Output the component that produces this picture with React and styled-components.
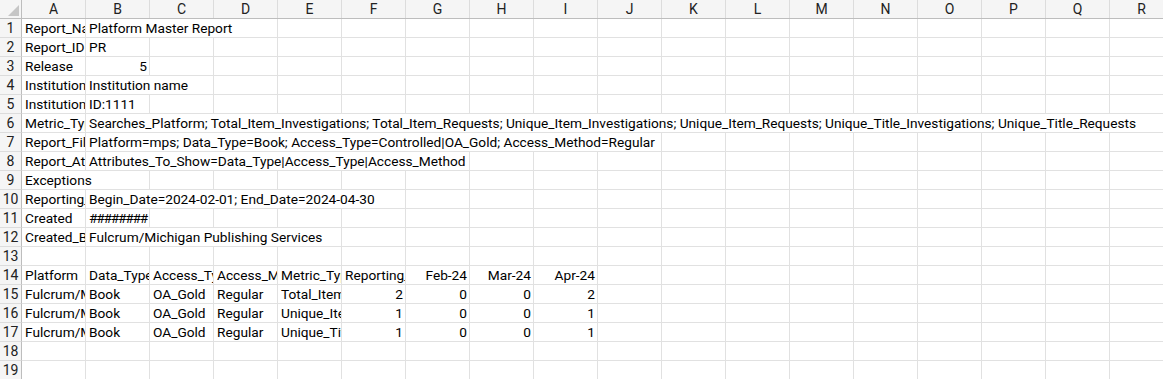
import React from "react";
import styled, { createGlobalStyle } from "styled-components";

const GlobalStyle = createGlobalStyle`
    html, body {
        margin: 0;
        padding: 0;
        background: #ffffff;
        overflow: hidden;
    }
    body {
        font-family: Roboto, "Liberation Sans", Arial, sans-serif;
    }
`;

const COLS = "ABCDEFGHIJKLMNOPQR".split("");
const COL_W = 64;
const ROW_H = 19;
const HEAD_W = 22;

const Sheet = styled.div`
    width: ${HEAD_W + COLS.length * COL_W}px;
    display: flex;
    flex-direction: column;
    font-size: 13.7px;
    color: #000;
`;

const Row = styled.div`
    display: grid;
    grid-template-columns: ${HEAD_W}px repeat(${COLS.length}, ${COL_W}px);
    height: ${ROW_H}px;
`;

const HeadRow = styled(Row)`
    background: #f5f5f5;
    border-bottom: 1px solid #bdbdbd;
    height: ${ROW_H - 1}px;
`;

const Corner = styled.div`
    position: relative;
    border-right: 1px solid #bdbdbd;
    &::after {
        content: "";
        position: absolute;
        right: 2px;
        bottom: 2px;
        width: 0;
        height: 0;
        border-left: 11px solid transparent;
        border-bottom: 11px solid #c6c6c6;
    }
`;

const ColHead = styled.div`
    display: flex;
    align-items: center;
    justify-content: center;
    border-right: 1px solid #dcdcdc;
    color: #222;
    font-size: 14px;
`;

const RowHead = styled.div`
    display: flex;
    align-items: center;
    justify-content: center;
    background: #f5f5f5;
    border-right: 1px solid #bdbdbd;
    border-bottom: 1px solid #dcdcdc;
    color: #222;
    font-size: 14px;
`;

const Cell = styled.div`
    grid-column: span ${(p) => p.$span || 1};
    box-sizing: border-box;
    border-right: 1px solid #e1e1e1;
    border-bottom: 1px solid #e1e1e1;
    padding: 0 2px 0 3px;
    white-space: nowrap;
    overflow: hidden;
    line-height: ${ROW_H - 1}px;
    text-align: ${(p) => (p.$align || "left")};
`;

// a date that doesn't fit its column shows as a row of hashes
const Hashes = styled.span`
    letter-spacing: -1.2px;
`;

// sparse sheet data: [row, col, text, span, align]
const cells = [
    [1, "A", "Report_Name"], [1, "B", "Platform Master Report", 3],
    [2, "A", "Report_ID"], [2, "B", "PR"],
    [3, "A", "Release"], [3, "B", "5", 1, "right"],
    [4, "A", "Institution_Name"], [4, "B", "Institution name", 2],
    [5, "A", "Institution_ID"], [5, "B", "ID:1111"],
    [6, "A", "Metric_Types"],
    [6, "B", "Searches_Platform; Total_Item_Investigations; Total_Item_Requests; Unique_Item_Investigations; Unique_Item_Requests; Unique_Title_Investigations; Unique_Title_Requests", 17],
    [7, "A", "Report_Filters"],
    [7, "B", "Platform=mps; Data_Type=Book; Access_Type=Controlled|OA_Gold; Access_Method=Regular", 9],
    [8, "A", "Report_Attributes"],
    [8, "B", "Attributes_To_Show=Data_Type|Access_Type|Access_Method", 6],
    [9, "A", "Exceptions", 2],
    [10, "A", "Reporting_Period"], [10, "B", "Begin_Date=2024-02-01; End_Date=2024-04-30", 5],
    [11, "A", "Created"], [11, "B", <Hashes>########</Hashes>, 1, "center"],
    [12, "A", "Created_By"], [12, "B", "Fulcrum/Michigan Publishing Services", 4],
    [14, "A", "Platform"], [14, "B", "Data_Type"], [14, "C", "Access_Type"],
    [14, "D", "Access_Method"], [14, "E", "Metric_Type"], [14, "F", "Reporting_Period_Total"],
    [14, "G", "Feb-24", 1, "right"], [14, "H", "Mar-24", 1, "right"], [14, "I", "Apr-24", 1, "right"],
];

const metrics = [
    ["Total_Item_Requests", "2", "0", "0", "2"],
    ["Unique_Item_Requests", "1", "0", "0", "1"],
    ["Unique_Title_Requests", "1", "0", "0", "1"],
];
metrics.forEach((m, i) => {
    const r = 15 + i;
    cells.push([r, "A", "Fulcrum/Michigan Publishing Services"]);
    cells.push([r, "B", "Book"]);
    cells.push([r, "C", "OA_Gold"]);
    cells.push([r, "D", "Regular"]);
    cells.push([r, "E", m[0]]);
    ["F", "G", "H", "I"].forEach((c, j) => cells.push([r, c, m[j + 1], 1, "right"]));
});

const ROWS = 19;

function buildRow(r) {
    const out = [];
    let i = 0;
    while (i < COLS.length) {
        const col = COLS[i];
        const hit = cells.find((c) => c[0] === r && c[1] === col);
        if (hit) {
            const span = hit[3] || 1;
            out.push(
                <Cell key={col} $span={span} $align={hit[4]}>
                    {hit[2]}
                </Cell>
            );
            i += span;
        } else {
            out.push(<Cell key={col} />);
            i += 1;
        }
    }
    return out;
}

export default function App() {
    const rows = [];
    for (let r = 1; r <= ROWS; r++) rows.push(r);

    return (
        <>
            <GlobalStyle />
            <Sheet>
                <HeadRow>
                    <Corner />
                    {COLS.map((c) => (
                        <ColHead key={c}>{c}</ColHead>
                    ))}
                </HeadRow>
                {rows.map((r) => (
                    <Row key={r}>
                        <RowHead>{r}</RowHead>
                        {buildRow(r)}
                    </Row>
                ))}
            </Sheet>
        </>
    );
}
